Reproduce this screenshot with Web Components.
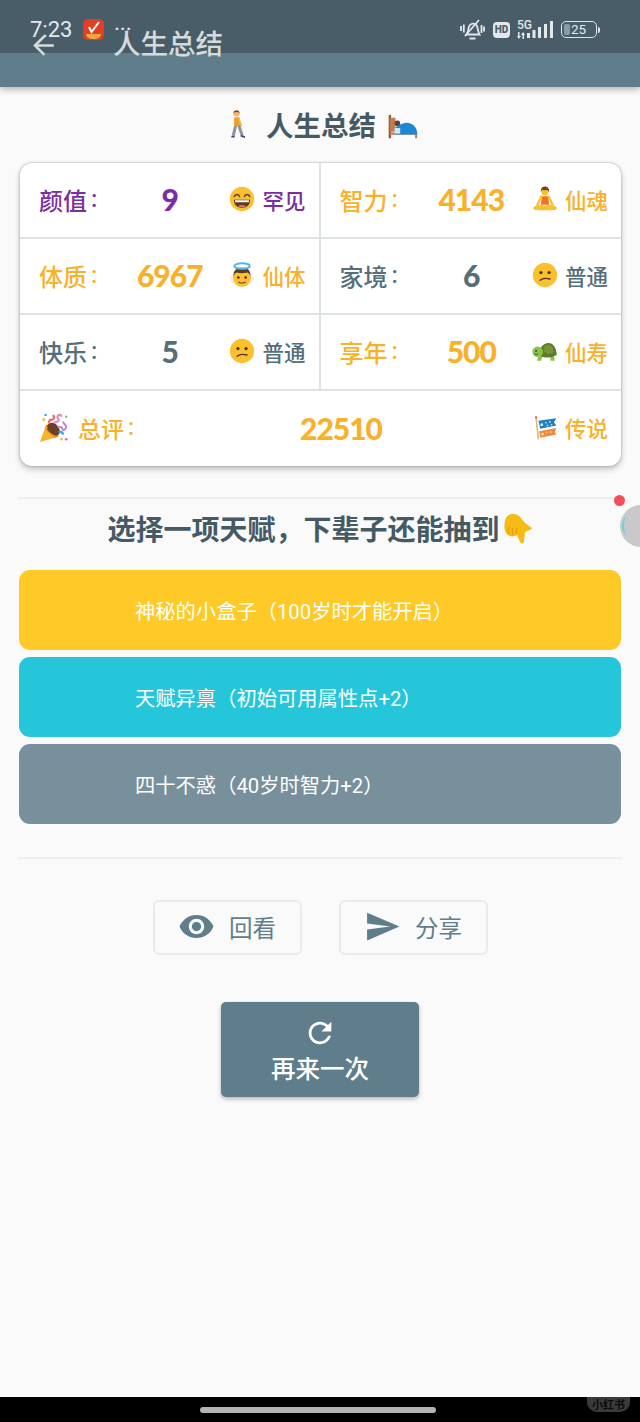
<!DOCTYPE html>
<html lang="zh">
<head>
<meta charset="utf-8">
<title>人生总结</title>
<style>
  html, body { margin: 0; padding: 0; background: #fafafa; }
  body { font-family: Roboto, "Noto Sans CJK SC", sans-serif; }
</style>
</head>
<body>
<life-page></life-page>

<script>
const FONT = 'Roboto, "Noto Sans CJK SC", sans-serif'

const EMOJI = {
  walker: `
    <circle cx="15.5" cy="4.6" r="3.4" fill="#f6b26b"/>
    <path d="M12 4.200a3.600 3.600 0 0 1 7 0c-2-1.200-5-1.200-7 0z" fill="#6d4c41"/>
    <path d="M13 8.800h5.500l1.500 9.500h-7z" fill="#f59a23"/>
    <path d="M18 10l2.500 8.500" stroke="#e9b949" stroke-width="2" fill="none"/>
    <path d="M14.500 18l-2.500 10.500M18 18l3.500 10" stroke="#8f939b" stroke-width="3.200" fill="none"/>
    <path d="M10 29.500h3.500M20 28.500l4.500 1.500" stroke="#4a3f8f" stroke-width="2" fill="none"/>`,
  bed: `
    <path d="M2 2v25" stroke="#9c5a3a" stroke-width="2.600"/>
    <rect x="2" y="5" width="6" height="15" fill="#c27c52"/>
    <path d="M2 22h28v5" stroke="#c27c52" stroke-width="2.200" fill="none"/>
    <circle cx="10" cy="11" r="3" fill="#5d4037"/>
    <path d="M7 17c3-4 7-5 10-6 6-2 13 2 14 9v3H7z" fill="#1e88d2"/>
    <path d="M7 16h6v6H7z" fill="#d5e6f3"/>`,
  grin: `
    <circle cx="16" cy="16" r="15" fill="#fbc02d"/>
    <path d="M6.500 13c1-3.500 5.500-3.500 6.500 0M19 13c1-3.500 5.500-3.500 6.500 0" stroke="#5d4037" stroke-width="1.800" fill="none" stroke-linecap="round"/>
    <path d="M6 17h20c0 6.500-4.500 10-10 10S6 23.500 6 17z" fill="#5d3a1a"/>
    <path d="M7.500 17.500h17v2.500h-17z" fill="#fff"/>
    <path d="M11 25c3-2 7-2 10 0-3 2-7 2-10 0z" fill="#e57373"/>`,
  confused: `
    <circle cx="16" cy="16" r="15" fill="#fbc02d"/>
    <circle cx="11" cy="13" r="2" fill="#4e342e"/>
    <circle cx="21" cy="13" r="2" fill="#4e342e"/>
    <path d="M10 22.500c3-2.600 7-3 12-1.500" stroke="#4e342e" stroke-width="1.800" fill="none" stroke-linecap="round"/>`,
  angel: `
    <path d="M1 20c1-3 4-4 6-3v10c-3 0-5-3-6-7zM31 20c-1-3-4-4-6-3v10c3 0 5-3 6-7z" fill="#f1ede4"/>
    <circle cx="16" cy="19.500" r="11" fill="#fbc02d"/>
    <path d="M5.500 18c-.5-8 4-11 10.500-11s11 3 10.500 11c-1-3-2-4.500-4-5-3.500 1-9.500 1-13 0-2 .5-3 2-4 5z" fill="#5d3a1f"/>
    <ellipse cx="16" cy="5" rx="9.500" ry="3.400" fill="none" stroke="#58b6e4" stroke-width="2.400"/>
    <circle cx="11.500" cy="19" r="1.500" fill="#3e2723"/>
    <circle cx="20.500" cy="19" r="1.500" fill="#3e2723"/>
    <path d="M11.500 24.500c3 1.800 6 1.800 9 0" stroke="#8d4a25" stroke-width="1.500" fill="none"/>`,
  yoga: `
    <circle cx="16" cy="7" r="4.400" fill="#fbc02d"/>
    <path d="M11 8c-1-5 2-7.500 5-7.500s6 2.500 5 7.500c-.5-2-1.500-3-3-3.500-2 .8-4 .8-5 .2-1.200.6-1.700 1.800-2 3.300z" fill="#6d4127"/>
    <path d="M12 12.500h8l1 10.500H11z" fill="#f4711f"/>
    <path d="M11.500 13L6.500 23.500M20.500 13l5 10.500" stroke="#fbc02d" stroke-width="2.800" fill="none" stroke-linecap="round"/>
    <path d="M1.500 26.500c4-4 10.500-4 14.500-2 4-2 10.500-2 14.500 2 .8 2-2 3.500-5 3-3 .5-16 .5-19 0-3 .5-5.800-1-5-3z" fill="#fbc02d"/>`,
  turtle: `
    <path d="M8 22l-2 6h5l2-5zM22 22l1 6h5l-1-6z" fill="#8bc34a"/>
    <path d="M27 17l4 1-1 4-4-1z" fill="#8bc34a"/>
    <path d="M9 21c0-9 5-15 11-15s10 6 10 13c0 3-6 5-11 5s-10-1-10-3z" fill="#5e7d2a"/>
    <path d="M15 10l6-2 5 4 0 6-6 2-5-3z" fill="#76943a"/>
    <circle cx="7" cy="17" r="6.500" fill="#8bc34a"/>
    <circle cx="5" cy="16" r="1.100" fill="#2e4417"/>
    <path d="M3 19.500c1.500 1 3 1 4.500 0" stroke="#2e4417" stroke-width="1" fill="none"/>`,
  popper: `
    <path d="M1 31l7-19 13 13z" fill="#f6b42c"/>
    <path d="M8 12l13 13-5 2-10-10z" fill="#f0992a"/>
    <path d="M9 13c3-4 8-3 11 1s3 7 0 10c-4 1-8-3-11-6z" fill="#6d4127"/>
    <path d="M11 11c-1-3 1-4 3-4s3-2 1-5" stroke="#ef6c6c" stroke-width="2.400" fill="none"/>
    <path d="M16 11c2-3 5-1 5-3s-2-3-1-5 4-1 4 1" stroke="#e88bc3" stroke-width="2.400" fill="none"/>
    <path d="M20 15c2-1 5 0 5 2s4 1 4-2-4-3-3-6" stroke="#b98ad6" stroke-width="2.200" fill="none"/>
    <path d="M21 21c3-2 4 0 5 2" stroke="#3f9fe0" stroke-width="2.400" fill="none"/>
    <circle cx="5" cy="7" r="1.500" fill="#f6b42c"/>
    <circle cx="29" cy="4" r="1.300" fill="#81c784"/>
    <circle cx="7" cy="2" r="1.300" fill="#3f9fe0"/>
    <circle cx="29" cy="28" r="1.400" fill="#ef6c6c"/>
    <circle cx="24" cy="28" r="1.300" fill="#f6b42c"/>`,
  carp: `
    <path d="M5 3l3 27" stroke="#dcb877" stroke-width="2"/>
    <circle cx="5" cy="3" r="1.400" fill="#e0574a"/>
    <path d="M8 7l22-3-3 5 3 4-20 4z" fill="#1e7fc4"/>
    <circle cx="12" cy="12" r="1.800" fill="#d8ecf7"/>
    <path d="M16 8.500h2v2h-2zM21 7.500h2v2h-2zM18 12h2v2h-2zM23 11h2v2h-2z" fill="#a9d6f2"/>
    <path d="M9 20l21-4-2 5 2 3-20 4z" fill="#ef8a3c"/>
    <circle cx="13" cy="23.500" r="1.800" fill="#fde3c8"/>
    <path d="M17 20.500h2v2h-2zM22 20h2v2h-2z" fill="#f8c08c"/>`,
  down: `
    <path d="M8 1c3-2 9-1 11 2l5 6 7 5c-1 2-3 2-5 3l-2 1-1 9c0 3-3 3-4 1l-3-7c-3 2-8 2-10-1-3-3-3-9-2-13 .5-3 2-5 4-6z" fill="#f7bb16"/>
    <path d="M8 13c-1 3-1 5 0 7M12 14c-1 3-1 5 0 7M16 14c-1 3-1 4 0 6" stroke="#e0a20c" stroke-width="1.200" fill="none"/>`
}

const ICONS = {
  back: 'M20 11H7.830l5.590-5.590L12 4l-8 8 8 8 1.410-1.410L7.830 13H20v-2z',
  eye: 'M12 4.500C7 4.500 2.730 7.610 1 12c1.730 4.390 6 7.500 11 7.500s9.270-3.110 11-7.500c-1.730-4.390-6-7.500-11-7.500zM12 17c-2.760 0-5-2.240-5-5s2.240-5 5-5 5 2.240 5 5-2.240 5-5 5zm0-8c-1.660 0-3 1.340-3 3s1.340 3 3 3 3-1.340 3-3-1.340-3-3-3z',
  send: 'M2.010 21L23 12 2.010 3 2 10l15 2-15 2z',
  refresh: 'M17.650 6.350C16.200 4.900 14.210 4 12 4c-4.420 0-7.990 3.580-7.990 8s3.570 8 7.990 8c3.730 0 6.840-2.550 7.730-6h-2.080c-.820 2.330-3.040 4-5.650 4-3.310 0-6-2.690-6-6s2.690-6 6-6c1.660 0 3.140.690 4.220 1.780L13 11h7V4l-2.350 2.350z'
}

const icon = (name, size) =>
  `<svg width="${size}" height="${size}" viewBox="0 0 24 24" fill="currentColor"><path d="${ICONS[name]}"/></svg>`

class LifeEmoji extends HTMLElement {
  connectedCallback () {
    const size = this.getAttribute('size') || 26
    this.attachShadow({ mode: 'open' }).innerHTML = `
    <style>
      :host{ display: inline-flex; flex: none; }
      svg{ display: block; }
    </style>
    <svg width="${size}" height="${size}" viewBox="0 0 32 32">${EMOJI[this.getAttribute('name')]}</svg>
    `
  }
}

class StatusBar extends HTMLElement {
  connectedCallback () {
    this.attachShadow({ mode: 'open' }).innerHTML = `
    <style>
      :host{
        align-items: flex-start;
        background: rgba(62, 80, 90, 0.72);
        box-sizing: border-box;
        color: #e4e8ea;
        display: flex;
        font-family: ${FONT};
        height: 53px;
        inset: 0 0 auto 0;
        padding: 19px 40px 0 30px;
        position: absolute;
      }
      .time{ font-size: 22px; line-height: 21px; margin-right: 11px; }
      .app{ margin-right: 10px; }
      .dots{ font-size: 17px; font-weight: 700; letter-spacing: 1px; line-height: 11px; }
      .right{ align-items: center; display: flex; height: 21px; margin-left: auto; }
      .hd{
        background: #e4e8ea; border-radius: 4px; color: #4a5f6a;
        font-size: 10px; font-weight: 900; height: 16px; line-height: 16px;
        margin: 0 7px 0 8px; text-align: center; width: 17px;
      }
      .net{
        display: flex; flex-direction: column; font-size: 12px; font-weight: 500;
        gap: 2px; line-height: 10px; white-space: nowrap; width: 10px;
      }
      .bat{
        border: 1.5px solid #dfe4e6; border-radius: 5px; box-sizing: border-box;
        font-size: 13.5px; height: 17px; line-height: 14px; margin-left: 8px;
        padding-left: 9px; position: relative; width: 36px;
      }
      .bat::before{ background: #8b9aa2; border-radius: 2px; content: ''; inset: 2px auto 2px 2px; position: absolute; width: 6px; }
      .nub{ background: #dfe4e6; border-radius: 0 2px 2px 0; height: 6px; margin-left: 1px; width: 2px; }
      svg{ display: block; flex: none; }
    </style>
    <span class="time">7:23</span>
    <svg class="app" width="21" height="21" viewBox="0 0 21 21">
      <rect width="21" height="21" rx="5" fill="#e53c23"/>
      <path d="M3 15h15c0 3-3 5-7.500 5S3 18 3 15z" fill="#f0a63a"/>
      <path d="M6 8l2.500 5L16 3" stroke="#fff" stroke-width="2" fill="none"/>
    </svg>
    <span class="dots">...</span>
    <div class="right">
      <svg width="25" height="21" viewBox="0 0 25 21" fill="none" stroke="#e4e8ea" stroke-width="1.800">
        <path d="M6.500 15.500c2-2 1.500-5 2.500-8s6-4.500 8-.5c1 3 1 6 2.500 8.500z"/>
        <path d="M9.500 19.500h6M5 17L19 1M1 7v5M3.800 5.500v8M21.500 6v8M24 7.500v5"/>
      </svg>
      <span class="hd">HD</span>
      <div class="net">
        <span>5G</span>
        <svg width="9" height="7" viewBox="0 0 9 7" fill="#e4e8ea"><path d="M1 0h1.500v4H4L1.800 7 0 4h1zM6 0l2.200 3H7v4H5.500V3H4z"/></svg>
      </div>
      <svg width="26" height="17" viewBox="0 0 26 17" fill="#e4e8ea">
        <rect x="0" y="12" width="3" height="5"/>
        <rect x="5.500" y="9" width="3" height="8"/>
        <rect x="11" y="6" width="3" height="11"/>
        <rect x="17" y="3" width="3" height="14"/>
        <rect x="23" y="0" width="3" height="17"/>
      </svg>
      <span class="bat">25</span>
      <span class="nub"></span>
    </div>
    `
  }
}

class AppBar extends HTMLElement {
  connectedCallback () {
    this.attachShadow({ mode: 'open' }).innerHTML = `
    <style>
      :host{
        background: #607d8b;
        box-shadow: 0 2px 7px rgba(0, 0, 0, 0.32);
        display: block;
        height: 87px;
        position: relative;
      }
      .bar{
        align-items: center;
        color: #d5dadd;
        display: flex;
        height: 30px;
        padding: 30px 0 0 28px;
        position: relative;
      }
      .title{ font-size: 27.5px; font-weight: 500; line-height: 30px; margin-left: 54px; }
      svg{ display: block; }
    </style>
    <status-bar></status-bar>
    <div class="bar">
      ${icon('back', 31)}
      <span class="title"><slot></slot></span>
    </div>
    `
  }
}

class SectionTitle extends HTMLElement {
  connectedCallback () {
    this.attachShadow({ mode: 'open' }).innerHTML = `
    <style>
      :host{
        align-items: center;
        color: #455a64;
        display: flex;
        font-size: 27.5px;
        font-weight: 700;
        justify-content: center;
      }
    </style>
    <slot></slot>
    `
  }
}

class StatCell extends HTMLElement {
  connectedCallback () {
    const total = this.hasAttribute('total')
    const get = (name) => this.getAttribute(name)
    this.attachShadow({ mode: 'open' }).innerHTML = `
    <style>
      :host{
        align-items: center;
        box-sizing: border-box;
        color: #546e7a;
        display: flex;
        height: 76px;
        padding: 0 13px 2px 19px;
      }
      :host([tone="rare"]){ color: #7b2da3; }
      :host([tone="gold"]){ color: #f9b02a; }
      :host([total]){ grid-column: 1 / 3; height: 75px; }
      .label{ align-items: center; display: flex; font-size: 24px; font-weight: 500; flex: none; width: 71px; }
      :host([total]) .label{ font-size: 23px; width: 111px; }
      :host([total]) .label life-emoji{ margin-right: 9px; }
      .colon{ margin-left: 4px; }
      .value{ flex: 1; font-family: Lato, sans-serif; font-size: 30px; font-weight: 900; letter-spacing: -1px; text-align: center; }
      .grade{ align-items: center; display: flex; font-size: 21.5px; font-weight: 500; gap: 7px; }
    </style>
    <span class="label">
      ${total ? '<life-emoji name="popper" size="30"></life-emoji>' : ''}
      ${get('label')}<span class="colon">:</span>
    </span>
    <span class="value">${get('value')}</span>
    <span class="grade"><life-emoji name="${get('emoji')}" size="26"></life-emoji>${get('grade')}</span>
    `
  }
}

class StatCard extends HTMLElement {
  connectedCallback () {
    this.attachShadow({ mode: 'open' }).innerHTML = `
    <style>
      :host{
        background: #fff;
        border-radius: 12px;
        box-shadow: 0 0 2px rgba(70, 90, 100, 0.55), 0 3px 6px rgba(0, 0, 0, 0.24);
        display: grid;
        grid-template-columns: 1fr 1fr;
        margin-left: 1px;
        overflow: hidden;
      }
      ::slotted(stat-cell){ border-bottom: 2px solid #dde2e4; }
      ::slotted(stat-cell:nth-child(odd)){ border-right: 2px solid #dde2e4; }
      ::slotted(stat-cell[total]){ border-bottom: 0; border-right: 0; }
    </style>
    <slot></slot>
    `
  }
}

class TalentButton extends HTMLElement {
  connectedCallback () {
    this.attachShadow({ mode: 'open' }).innerHTML = `
    <style>
      :host{
        align-items: center;
        border-radius: 11px;
        box-sizing: border-box;
        color: #fff;
        display: flex;
        font-size: 20.3px;
        font-weight: 400;
        height: 80px;
        padding-left: 116px;
      }
      :host([tone="gold"]){ background: #ffca28; }
      :host([tone="cyan"]){ background: #26c6da; }
      :host([tone="grey"]){ background: #78909c; }
    </style>
    <slot></slot>
    `
  }
}

class OutlineButton extends HTMLElement {
  connectedCallback () {
    this.attachShadow({ mode: 'open' }).innerHTML = `
    <style>
      :host{
        align-items: center;
        border: 2px solid #e8eaeb;
        border-radius: 6px;
        box-sizing: border-box;
        color: #607d8b;
        display: flex;
        font-size: 23.5px;
        gap: 14px;
        height: 55px;
        justify-content: center;
        padding-bottom: 2px;
        width: 149px;
      }
      svg{ display: block; }
    </style>
    ${icon(this.getAttribute('icon'), 37)}
    <slot></slot>
    `
  }
}

class RetryButton extends HTMLElement {
  connectedCallback () {
    this.attachShadow({ mode: 'open' }).innerHTML = `
    <style>
      :host{
        align-items: center;
        background: #607d8b;
        border-radius: 5px;
        box-sizing: border-box;
        box-shadow: 0 2px 4px rgba(0, 0, 0, 0.28);
        color: #fff;
        display: flex;
        flex-direction: column;
        font-size: 24.5px;
        font-weight: 500;
        height: 95px;
        padding-top: 14px;
        width: 198px;
      }
      svg{ display: block; }
      span{ line-height: 36px; margin-top: 2px; }
    </style>
    ${icon('refresh', 34)}
    <span><slot></slot></span>
    `
  }
}

class FloatBall extends HTMLElement {
  connectedCallback () {
    this.attachShadow({ mode: 'open' }).innerHTML = `
    <style>
      :host{ display: block; height: 60px; inset: 494px 0 auto auto; overflow: hidden; position: absolute; width: 26px; }
      .ball{ background: #c9c9c9; border-radius: 50%; height: 42px; left: 6px; position: absolute; top: 11px; width: 42px; }
      .ball::before{ border-left: 2px solid #5fd6e6; border-radius: 50%; content: ''; height: 18px; left: 2px; position: absolute; top: 12px; width: 8px; }
      .dot{ background: #f0505a; border-radius: 50%; height: 11px; left: 0; position: absolute; top: 1px; width: 11px; }
    </style>
    <div class="ball"></div>
    <div class="dot"></div>
    `
  }
}

class NavStrip extends HTMLElement {
  connectedCallback () {
    this.attachShadow({ mode: 'open' }).innerHTML = `
    <style>
      :host{
        background: #000;
        display: flex;
        height: 25px;
        justify-content: center;
        margin-top: auto;
        position: relative;
      }
      .home{ background: #b4b4b4; border-radius: 3px; height: 6px; margin: 10px 4px 0 0; width: 236px; }
      .mark{
        background: #3a3a3a; border-radius: 0 0 10px 10px; color: #0c0c0c;
        font-family: "Noto Sans CJK SC", sans-serif; font-size: 11px; font-weight: 700;
        height: 15px; left: 587px; line-height: 14px; position: absolute;
        text-align: center; top: 0; width: 43px;
      }
    </style>
    <div class="home"></div>
    <div class="mark">小红书</div>
    `
  }
}

class LifePage extends HTMLElement {
  connectedCallback () {
    this.attachShadow({ mode: 'open' }).innerHTML = `
    <style>
      :host{
        background: #fafafa;
        display: flex;
        flex-direction: column;
        font-family: ${FONT};
        height: 1422px;
        overflow: hidden;
        position: relative;
        width: 640px;
      }
      main{ display: flex; flex-direction: column; padding: 0 19px; }
      .head{ height: 76px; padding-bottom: 2px; box-sizing: border-box; }
      .head life-emoji:first-child{ margin-right: 14px; }
      .head life-emoji:last-child{ margin: 8px 0 0 12px; }
      hr{ background: #eceeef; border: 0; height: 2px; margin: 0; }
      .first{ margin-top: 31px; }
      .ask{ box-sizing: border-box; font-size: 28px; height: 71px; padding-bottom: 13px; }
      .ask life-emoji{ margin: 4px 0 0 1px; }
      .talents{ display: flex; flex-direction: column; gap: 7px; }
      .second{ margin-top: 33px; }
      .actions{ display: flex; gap: 37px; justify-content: center; margin-top: 41px; }
      .retry{ display: flex; justify-content: center; margin-top: 47px; }
    </style>
    <app-bar>人生总结</app-bar>
    <main>
      <section-title class="head">
        <life-emoji name="walker" size="30"></life-emoji>
        人生总结
        <life-emoji name="bed" size="30"></life-emoji>
      </section-title>
      <stat-card>
        <stat-cell label="颜值" value="9" emoji="grin" grade="罕见" tone="rare"></stat-cell>
        <stat-cell label="智力" value="4143" emoji="yoga" grade="仙魂" tone="gold"></stat-cell>
        <stat-cell label="体质" value="6967" emoji="angel" grade="仙体" tone="gold"></stat-cell>
        <stat-cell label="家境" value="6" emoji="confused" grade="普通"></stat-cell>
        <stat-cell label="快乐" value="5" emoji="confused" grade="普通"></stat-cell>
        <stat-cell label="享年" value="500" emoji="turtle" grade="仙寿" tone="gold"></stat-cell>
        <stat-cell total label="总评" value="22510" emoji="carp" grade="传说" tone="gold"></stat-cell>
      </stat-card>
      <hr class="first">
      <section-title class="ask">
        选择一项天赋，下辈子还能抽到
        <life-emoji name="down" size="32"></life-emoji>
      </section-title>
      <div class="talents">
        <talent-button tone="gold">神秘的小盒子（100岁时才能开启）</talent-button>
        <talent-button tone="cyan">天赋异禀（初始可用属性点+2）</talent-button>
        <talent-button tone="grey">四十不惑（40岁时智力+2）</talent-button>
      </div>
      <hr class="second">
      <div class="actions">
        <outline-button icon="eye">回看</outline-button>
        <outline-button icon="send">分享</outline-button>
      </div>
      <div class="retry">
        <retry-button>再来一次</retry-button>
      </div>
    </main>
    <float-ball></float-ball>
    <nav-strip></nav-strip>
    `
  }
}

customElements.define('life-emoji', LifeEmoji)
customElements.define('status-bar', StatusBar)
customElements.define('app-bar', AppBar)
customElements.define('section-title', SectionTitle)
customElements.define('stat-cell', StatCell)
customElements.define('stat-card', StatCard)
customElements.define('talent-button', TalentButton)
customElements.define('outline-button', OutlineButton)
customElements.define('retry-button', RetryButton)
customElements.define('float-ball', FloatBall)
customElements.define('nav-strip', NavStrip)
customElements.define('life-page', LifePage)
</script>
</body>
</html>
